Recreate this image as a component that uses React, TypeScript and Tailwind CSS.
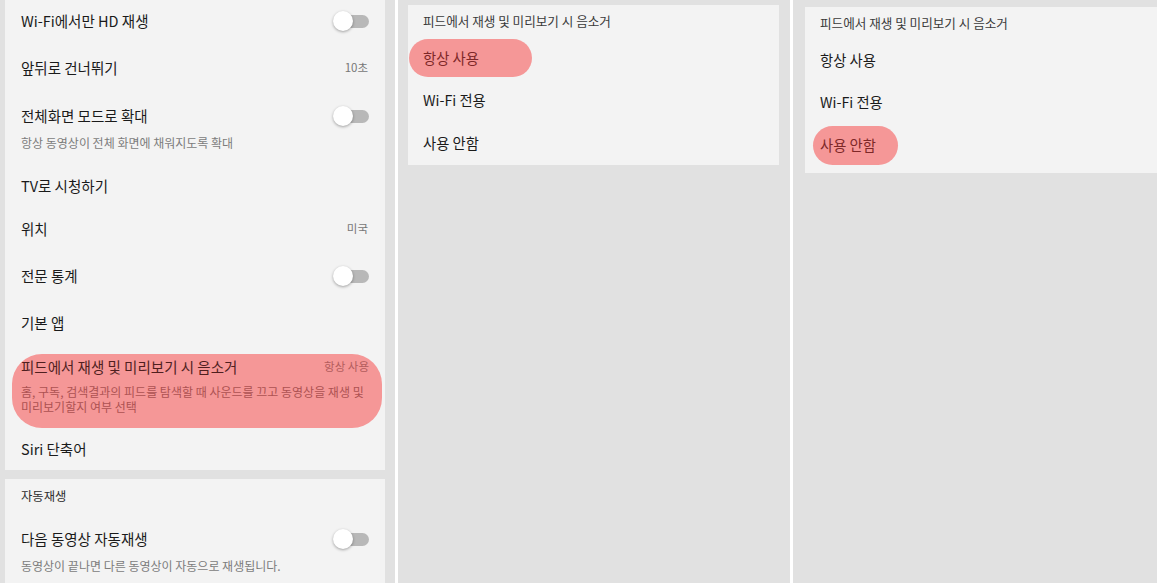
import React from "react";

const FONT = { fontFamily: '"Noto Sans CJK KR", "Noto Sans", sans-serif' };

function Toggle() {
  return (
    <div className="relative w-[36px] h-[20px] shrink-0">
      <div className="absolute right-0 top-[4px] w-[32px] h-[13px] rounded-full bg-[#b8b8b8]" />
      <div className="absolute left-0 top-0 w-[20px] h-[20px] rounded-full bg-white shadow-[0_1px_3px_rgba(0,0,0,0.35)]" />
    </div>
  );
}

function Row({ h, title, right }: { h: string; title: string; right?: React.ReactNode }) {
  return (
    <div className={`${h} flex items-center justify-between pl-[16px] pr-[16px]`}>
      <span className="text-[14.5px] text-[#1a1a1a] leading-none">{title}</span>
      {right}
    </div>
  );
}

function Val({ children }: { children: React.ReactNode }) {
  return <span className="text-[11.5px] text-[#777777] leading-none pr-[1px]">{children}</span>;
}

export default function App() {
  return (
    <div className="w-[1157px] h-[583px] flex bg-white overflow-hidden" style={FONT}>
      {/* Left screen */}
      <div className="w-[395px] h-full bg-[#e1e1e1] pl-[5px] pr-[10px] flex flex-col shrink-0">
        <div className="bg-[#f3f3f3] flex flex-col h-[470px]">
          <Row h="h-[42px]" title="Wi-Fi에서만 HD 재생" right={<Toggle />} />
          <Row h="h-[52px]" title="앞뒤로 건너뛰기" right={<Val>10초</Val>} />
          <div className="h-[70px] flex flex-col">
            <Row h="h-[44px]" title="전체화면 모드로 확대" right={<Toggle />} />
            <div className="pl-[16px] -mt-[2px] text-[12px] leading-[14px] text-[#7c7c7c]">
              항상 동영상이 전체 화면에 채워지도록 확대
            </div>
          </div>
          <Row h="h-[44px]" title="TV로 시청하기" />
          <Row h="h-[42px]" title="위치" right={<Val>미국</Val>} />
          <Row h="h-[52px]" title="전문 통계" right={<Toggle />} />
          <Row h="h-[42px]" title="기본 앱" />
          <div className="mt-[10px] ml-[7px] mr-[3px] h-[74px] rounded-[30px] bg-[#f59797] pt-[4px] pl-[9px] pr-[13px] flex flex-col">
            <div className="h-[18px] flex items-center justify-between">
              <span className="text-[14.5px] leading-none text-[#4f1f1f]">피드에서 재생 및 미리보기 시 음소거</span>
              <span className="text-[11.5px] leading-none text-[#b35d5d]">항상 사용</span>
            </div>
            <div className="mt-[8px] text-[12px] leading-[15px] text-[#ad5252] whitespace-nowrap">
              홈, 구독, 검색결과의 피드를 탐색할 때 사운드를 끄고 동영상을 재생 및
              <br />
              미리보기할지 여부 선택
            </div>
          </div>
          <Row h="h-[42px]" title="Siri 단축어" />
        </div>
        <div className="mt-[9px] bg-[#f3f3f3] flex-1 flex flex-col pt-[9px]">
          <div className="pl-[16px] h-[16px] flex items-center text-[12.3px] text-[#2e2e2e] leading-none">자동재생</div>
          <div className="mt-[13px]">
            <Row h="h-[44px]" title="다음 동영상 자동재생" right={<Toggle />} />
          </div>
          <div className="pl-[16px] -mt-[2px] text-[12px] leading-[14px] text-[#7c7c7c]">
            동영상이 끝나면 다른 동영상이 자동으로 재생됩니다.
          </div>
        </div>
      </div>

      <div className="w-[3px] shrink-0 bg-white" />

      {/* Middle screen */}
      <div className="w-[392px] h-full bg-[#e1e1e1] pl-[10px] pr-[11px] pt-[5px] shrink-0">
        <div className="bg-[#f3f3f3] h-[160px] flex flex-col">
          <div className="h-[32px] flex items-center pl-[15px] text-[12.6px] leading-none text-[#3a3a3a]">
            피드에서 재생 및 미리보기 시 음소거
          </div>
          <div className="h-[42px] flex items-center">
            <div className="ml-[1px] h-[38px] w-[123px] rounded-full bg-[#f59797] flex items-center pl-[14px] text-[14.3px] leading-none text-[#7e2828]">
              항상 사용
            </div>
          </div>
          <div className="h-[43px] flex items-center pl-[15px] text-[14.3px] leading-none text-[#1a1a1a]">Wi-Fi 전용</div>
          <div className="h-[42px] flex items-center pl-[15px] text-[14.3px] leading-none text-[#1a1a1a]">사용 안함</div>
        </div>
      </div>

      <div className="w-[3px] shrink-0 bg-white" />

      {/* Right screen */}
      <div className="flex-1 h-full bg-[#e1e1e1] pl-[12px] pt-[7px]">
        <div className="bg-[#f3f3f3] h-[166px] flex flex-col">
          <div className="h-[32px] flex items-center pl-[15px] text-[12.6px] leading-none text-[#3a3a3a]">
            피드에서 재생 및 미리보기 시 음소거
          </div>
          <div className="h-[42px] flex items-center pl-[15px] text-[14.3px] leading-none text-[#1a1a1a]">항상 사용</div>
          <div className="h-[43px] flex items-center pl-[15px] text-[14.3px] leading-none text-[#1a1a1a]">Wi-Fi 전용</div>
          <div className="h-[42px] flex items-center">
            <div className="ml-[8px] h-[39px] w-[85px] rounded-full bg-[#f59797] flex items-center pl-[7px] text-[14.3px] leading-none text-[#7e2828]">
              사용 안함
            </div>
          </div>
        </div>
      </div>
    </div>
  );
}
